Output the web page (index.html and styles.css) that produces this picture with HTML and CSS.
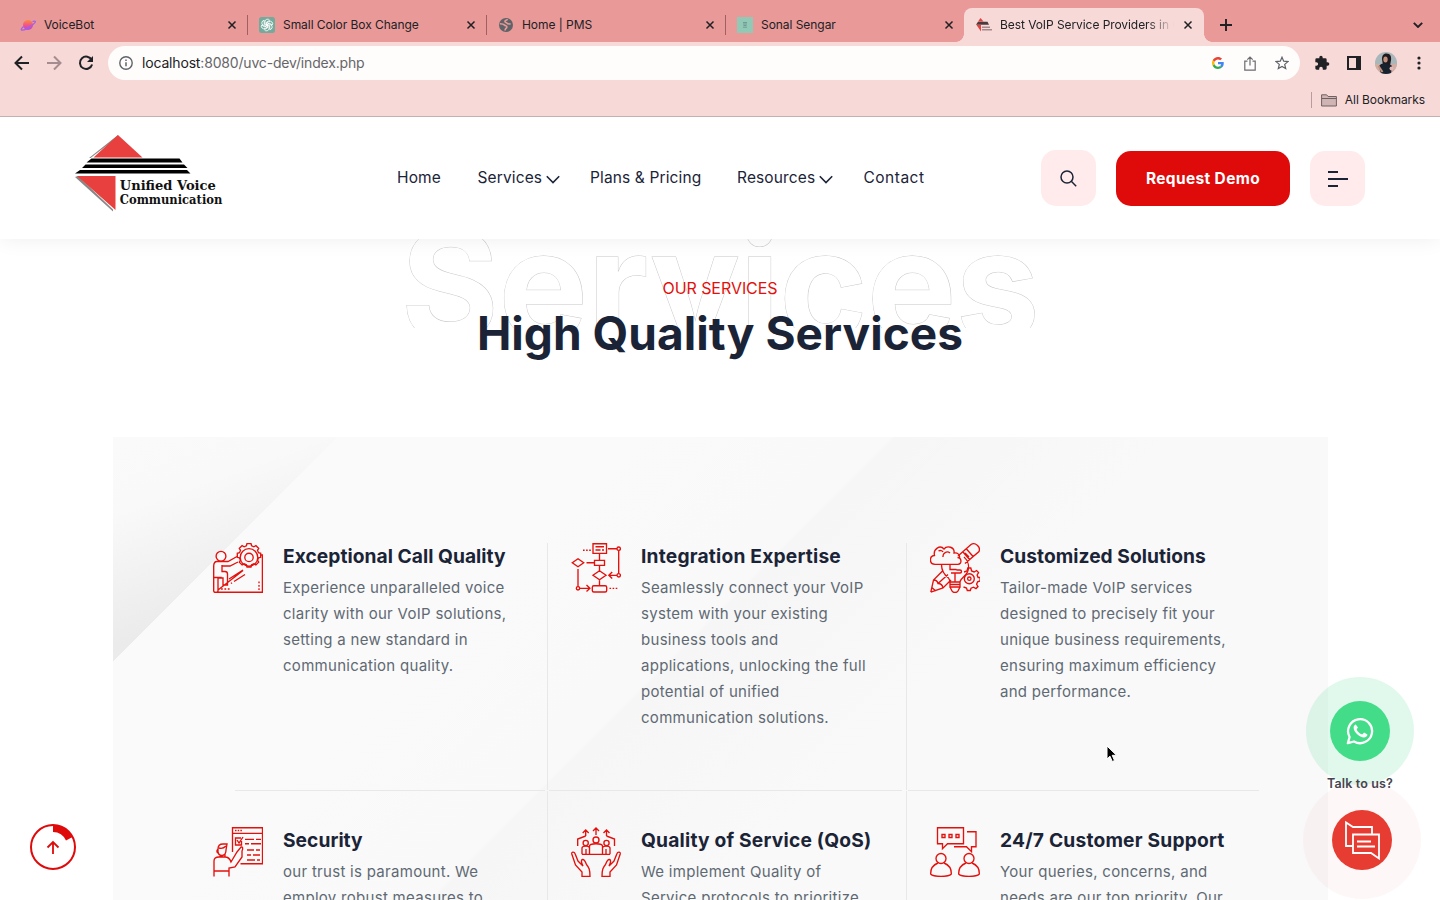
FILE: index.html
```html
<!DOCTYPE html>
<html lang="en">
<head>
<meta charset="utf-8">
<title>Best VoIP Service Providers</title>
<link rel="stylesheet" href="styles.css">
</head>
<body>
<div class="screen">
  <div class="chrome">
    <div class="tabs">
      <div class="tab">
        <svg class="fav" viewBox="0 0 16 16"><defs><linearGradient id="pl" x1="0" y1="0" x2="0" y2="1"><stop offset="0" stop-color="#fb8c3c"/><stop offset=".55" stop-color="#f0518c"/><stop offset="1" stop-color="#b04be0"/></linearGradient></defs><circle cx="8" cy="8" r="5" fill="url(#pl)"/><path d="M3.6 9.6C.8 11.8.6 13.4 2.6 13.2 6 12.800 14 7.500 15.300 5 15.600 3.800 14 3.900 12.500 4.500" fill="none" stroke="#a35fe6" stroke-width="1.300"/></svg>
        <span class="tt">VoiceBot</span><svg class="x" viewBox="0 0 10 10"><path d="M1.500 1.500l7 7M8.500 1.500l-7 7"/></svg>
      </div>
      <div class="tab sep">
        <svg class="fav" viewBox="0 0 16 16"><rect width="16" height="16" rx="2.500" fill="#74aa9c"/><g fill="none" stroke="#fff" stroke-width=".8"><path id="k" d="M6 8.200V4.600a2.500 2.500 0 0 1 4.600-1.300L7.400 5.200v4"/><use href="#k" transform="rotate(60 8 8)"/><use href="#k" transform="rotate(120 8 8)"/><use href="#k" transform="rotate(180 8 8)"/><use href="#k" transform="rotate(240 8 8)"/><use href="#k" transform="rotate(300 8 8)"/></g></svg>
        <span class="tt">Small Color Box Change</span><svg class="x" viewBox="0 0 10 10"><path d="M1.500 1.500l7 7M8.500 1.500l-7 7"/></svg>
      </div>
      <div class="tab sep">
        <svg class="fav" viewBox="0 0 16 16"><circle cx="8" cy="8" r="7" fill="#5f6368"/><path d="M2 6.800c2 .1 3.500.2 4.600 1.300.8.9 2.300.3 2.300 1.800 0 1.300-1.700 1-1.900 3.600M9.500 2.200c-.3 1.500-2.600.8-2.600 2.300 0 1.200 1.600.6 2.100 1.600.5 1 1.800 1 3.600.8" fill="none" stroke="#e99998" stroke-width="1.600"/></svg>
        <span class="tt">Home | PMS</span><svg class="x" viewBox="0 0 10 10"><path d="M1.500 1.500l7 7M8.500 1.500l-7 7"/></svg>
      </div>
      <div class="tab sep">
        <svg class="fav" viewBox="0 0 16 16"><rect width="16" height="16" fill="#92c9b6"/><path d="M6 5.500h4M6 7h4M6.500 8.500h3M6 10.200h4" stroke="#6f9d90" stroke-width="1"/></svg>
        <span class="tt">Sonal Sengar</span><svg class="x" viewBox="0 0 10 10"><path d="M1.500 1.500l7 7M8.500 1.500l-7 7"/></svg>
      </div>
      <div class="tab active">
        <svg class="fav" viewBox="0 0 16 16"><path d="M4.500 1L7.500 4.500H2zM.5 8H5v6.500z" fill="#e8403f"/><path d="M2 4.800h9.500l1.500 3H0z" fill="#4a3a3c"/><path d="M6 10.300h8M6 12.700h10" stroke="#a58a8b" stroke-width="1.400"/></svg>
        <span class="tt fade">Best VoIP Service Providers in C</span><svg class="x" viewBox="0 0 10 10"><path d="M1.500 1.500l7 7M8.500 1.500l-7 7"/></svg>
      </div>
      <svg class="plus" viewBox="0 0 12 12"><path d="M6 0v12M0 6h12"/></svg>
      <svg class="chev" viewBox="0 0 10 6"><path d="M.8.8L5 5 9.200.8"/></svg>
    </div>
    <div class="toolbar">
      <svg class="tb" viewBox="0 0 16 16"><path d="M15 8H2M8 1.500L1.500 8 8 14.500" fill="none" stroke="#202124" stroke-width="2"/></svg>
      <svg class="tb" viewBox="0 0 16 16"><path d="M1 8h13M8 1.500L14.500 8 8 14.500" fill="none" stroke="#a58c8e" stroke-width="2"/></svg>
      <svg class="tb" viewBox="0 0 16 16"><path d="M13.700 5A6.200 6.200 0 1 0 14.100 9.500" fill="none" stroke="#202124" stroke-width="2"/><path d="M15 1v6H9z" fill="#202124"/></svg>
      <div class="omni">
        <svg class="info" viewBox="0 0 14 14"><circle cx="7" cy="7" r="6.200" fill="none" stroke="#5f6368" stroke-width="1.400"/><path d="M7 6.200v4M7 3.400v1.600" stroke="#5f6368" stroke-width="1.500"/></svg>
        <span class="url"><b>localhost</b>:8080/uvc-dev/index.php</span>
        <svg class="g" viewBox="0 0 48 48"><path fill="#EA4335" d="M24 9.500c3.500 0 6.700 1.200 9.200 3.600l6.900-6.900C35.900 2.400 30.500 0 24 0 14.600 0 6.500 5.400 2.600 13.200l8 6.200C12.400 13.700 17.700 9.500 24 9.500z"/><path fill="#4285F4" d="M47 24.600c0-1.600-.2-3.100-.4-4.600H24v9h12.900c-.6 3-2.300 5.500-4.800 7.200l7.700 6C44.400 38 47 31.800 47 24.600z"/><path fill="#FBBC05" d="M10.500 28.600a14.500 14.500 0 0 1 0-9.200l-8-6.200a24 24 0 0 0 0 21.600z"/><path fill="#34A853" d="M24 48c6.500 0 11.900-2.100 15.900-5.800l-7.700-6c-2.200 1.500-4.900 2.300-8.200 2.300-6.300 0-11.600-4.200-13.500-9.900l-8 6.200C6.500 42.600 14.600 48 24 48z"/></svg>
        <svg class="share" viewBox="0 0 12 15"><path d="M3.500 5.200H.8v8.900h10.400V5.200H8.500M6 9.500V1.200M3.300 3.600L6 1l2.700 2.600" fill="none" stroke="#6b6b70" stroke-width="1.200"/></svg>
        <svg class="star" viewBox="0 0 14 14"><path d="M7 1.200l1.700 4 4.300.4-3.300 2.800 1 4.200L7 10.400l-3.700 2.200 1-4.200L1 5.600l4.300-.4z" fill="none" stroke="#5f6368" stroke-width="1.200"/></svg>
      </div>
      <svg class="ext" viewBox="0 0 24 24"><path fill="#202124" d="M20.500 11H19V7a2 2 0 0 0-2-2h-4V3.500a2.500 2.500 0 0 0-5 0V5H4a2 2 0 0 0-2 2v3.800h1.500a2.700 2.700 0 0 1 0 5.400H2V20c0 1.100.9 2 2 2h3.800v-1.500a2.700 2.700 0 0 1 5.400 0V22H17a2 2 0 0 0 2-2v-4h1.500a2.500 2.500 0 0 0 0-5z"/></svg>
      <svg class="side" viewBox="0 0 14 14"><path d="M1 1h12v12H1z" fill="none" stroke="#202124" stroke-width="2"/><path d="M9 1h4v12H9z" fill="#202124"/></svg>
      <svg class="ava" viewBox="0 0 22 22"><defs><clipPath id="av"><circle cx="11" cy="11" r="11"/></clipPath></defs><g clip-path="url(#av)"><rect width="22" height="22" fill="#a9b7ba"/><rect y="12" width="22" height="10" fill="#d0aea4"/><path d="M7 7c0-4 2-5.500 4.500-5.500 4 0 5 3 4.500 7l-1 5H8z" fill="#1d1a20"/><ellipse cx="10.500" cy="7.500" rx="2.200" ry="3" fill="#c58f7c"/><path d="M4 14c2-3 5-3 7-2s5 0 6 2l-1 8H6z" fill="#17222f"/><path d="M3.500 14l4 6" stroke="#c58f7c" stroke-width="2"/><circle cx="16.500" cy="16.500" r="2" fill="#e6b5b5"/></g></svg>
      <svg class="dots" viewBox="0 0 4 14"><circle cx="2" cy="2" r="1.600"/><circle cx="2" cy="7" r="1.600"/><circle cx="2" cy="12" r="1.600"/></svg>
    </div>
    <div class="marks">
      <i></i>
      <svg viewBox="0 0 16 13"><path d="M.6 12V.8h5l1.500 1.700h8.300V12z" fill="#d0b4b4" stroke="#6f6163" stroke-width="1"/><path d="M.6 4.500h14.800" stroke="#6f6163"/></svg>
      <span>All Bookmarks</span>
    </div>
  </div>

  <header class="head">
    <svg class="logo" viewBox="0 0 150 80"><g><path d="M43 1L14 24h1.500L43 3zM0 43l38 34.500v-2L3 42z" fill="#888"/><path d="M43 1L67.500 23.500H18.500z" fill="#e8403f"/><path d="M16.500 24.500H104.500l3 4H11.500zM10.500 30.500H109l3.500 3.500H7zM5 36h107l3.500 3.500H0z" fill="#000"/><path d="M2 42H40.500V76z" fill="#e8403f"/></g><g font-family="DejaVu Serif, serif" font-weight="700" fill="#111"><text x="44.800" y="55.500" font-size="12.500" textLength="96" lengthAdjust="spacingAndGlyphs">Unified Voice</text><text x="44.800" y="69.800" font-size="12" textLength="102.500" lengthAdjust="spacingAndGlyphs">Communication</text></g></svg>
    <nav class="nav">
      <a>Home</a>
      <a>Services<svg viewBox="0 0 14 9"><path d="M.8 1.200L7 7.500l6.200-6.300"/></svg></a>
      <a>Plans &amp; Pricing</a>
      <a>Resources<svg viewBox="0 0 14 9"><path d="M.8 1.200L7 7.500l6.200-6.300"/></svg></a>
      <a class="wide">Contact</a>
    </nav>
    <div class="acts">
      <div class="sq tall"><svg width="17" height="17" viewBox="0 0 17 17" fill="none" stroke="#1b2437" stroke-width="1.500"><circle cx="7" cy="7" r="6"/><path d="M11.300 11.300l4.900 4.900"/></svg></div>
      <div class="cta">Request Demo</div>
      <div class="sq"><svg width="20" height="16" viewBox="0 0 20 16"><path d="M0 1h10M0 8h20M0 15h10" stroke="#1b2437" stroke-width="2"/></svg></div>
    </div>
  </header>

  <main>
    <div class="intro">
      <div class="ghost"><span>Services</span></div>
      <p class="eyebrow">OUR SERVICES</p>
      <h2>High Quality Services</h2>
    </div>

    <section class="panel">
      <div class="row">
        <article class="cell">
          <svg class="ic" viewBox="0 0 50 50"><circle cx="8" cy="13.300" r="4.900"/><path d="M33.400 2.800l.6-2.200h4l.6 2.200 2.300 1 2-1.200 2.800 2.800-1.200 2 1 2.300 2.200.6v4l-2.200.6-1 2.300 1.200 2-2.800 2.800-2-1.200-2.300 1-.6 2.200h-4l-.6-2.200-2.300-1-2 1.200-2.800-2.800 1.200-2-1-2.300-2.200-.6v-4l2.200-.6 1-2.300-1.200-2 2.800-2.800 2 1.200z"/><circle cx="36" cy="14.400" r="8.800"/><circle cx="36" cy="14.400" r="4.200"/><path d="M47.500 12h1.900v37.200H2.500M24 13.500L15 18.500H4C2 18.500.7 20 .7 23v25c0 2 4.300 2 4.300 0V35h5v7h4.500V31c0-1.500-1-2.500-2.500-2.500H9V23h8l8-4M.7 34.500h8M9 22v7M5 47L30 27.500M16 36l14-9M21 38.500l11-7M18 40.500l1-.8"/><path d="M8 46h9M46 38.500v8.500" stroke-dasharray="1.800 1.600"/></svg>
          <div><h3>Exceptional Call Quality</h3><p>Experience unparalleled voice<br>clarity with our VoIP solutions,<br>setting a new standard in<br>communication quality.</p></div>
        </article>
        <article class="cell">
          <svg class="ic" viewBox="0 0 50 50"><path d="M22 .7h13.500v9.600H22zM24.500 3.700h8.500M24.500 7h5M31 7h2M28.500 10.300v7M23.500 17.300h10v5h-10zM28.500 22.300v5.500M28.500 27.800l6.500 4.500-6.500 4.500-6.500-4.500zM28.500 36.800v6M7 15.700l5.700 4-5.700 4-5.700-4zM15.500 19.700h8M7 26v17.500M8.700 45.300H19M15.500 42l3.400 3.300-3.400 3.300M37 5.700h9M47.700 7.400v23.200M46 32.300h-8M41.200 29l-3.400 3.300 3.400 3.300"/><rect x="21.300" y="42.700" width="14.400" height="6.300" rx="1.500"/><circle cx="7" cy="45.300" r="1.700"/><circle cx="47.700" cy="5.700" r="1.700"/><circle cx="47.700" cy="32.300" r="1.700"/><path d="M12 7.200h8M38.500 45.300h8" stroke-dasharray="1.600 1.500"/></svg>
          <div><h3 class="loose">Integration Expertise</h3><p>Seamlessly connect your VoIP<br>system with your existing<br>business tools and<br>applications, unlocking the full<br>potential of unified<br>communication solutions.</p></div>
        </article>
        <article class="cell last">
          <svg class="ic" viewBox="0 0 50 50"><path d="M5 21.300C-1 21-1 13 4.500 12.500 3 6 10 1.500 14 6c3-4 11-2 10 4 4-.5 6 2 5.500 4.500M5 21.300h23c4 0 4-6.500-.5-6.800M13 14c-.5-4 4-6.500 7-4M8.500 8c1.500-1 4-.5 4.500 1"/><path d="M11.500 21.500c0 7 3 10.500 7 13.500 1 1.500 1.500 2.500 1.500 4h10c0-3 5-5 7.500-10 2-5 1-11-3.500-15M20 39v5h10v-5M20 41.500h10M20 44l2 4c1 2 5 2 6 0l2-4M20 21.500v5h6.500M21 30h9c2 0 2-3 0-3h-3.500M25 30v9M28 13L41 1.500c4-2.500 10 2 8 7L35 20.500M33 9l7 8M36.500 6l7 8M39 14l-4-4M.8 49.200L3.500 37l9-9M.8 49.200L13 45l8-8M3.500 37c3 0 4 1 4.500 3.500 3 0 4.500 1.500 5 4.500M1.800 44.500l4 3.500M8 40.500l10-9"/><path d="M34 29l3-1 .8-3h3l.8 3 2.500 1 2.500-1.500 2 2-1.500 2.500 1 2.500h2v3.500l-2.500.8-1 2.500 1.400 2.300-2 2-2.500-1.400-2.500 1-.7 2.300h-3l-.8-2.500-3-1"/><circle cx="39.300" cy="35.700" r="5"/><circle cx="39.300" cy="35.700" r="1.700"/></svg>
          <div><h3>Customized Solutions</h3><p>Tailor-made VoIP services<br>designed to precisely fit your<br>unique business requirements,<br>ensuring maximum efficiency<br>and performance.</p></div>
        </article>
      </div>
      <div class="rule"><i></i><i></i><i></i></div>
      <div class="row second">
        <article class="cell">
          <svg class="ic" viewBox="0 0 50 50"><path d="M19.500 25V.7h30v36h-22M19.500 6.300h30M28 11h-5.500v7h6v-4M24 13l2 3 4-6M32 12.300h9M43 12.300h5M32 16.700h4M38 16.700h10M34 23h7M43 23h4M34 28h4M40 28h7M34 33h8M44 33h3"/><path d="M22 3.500h8" stroke-dasharray="1.500 1.200"/><path d="M5 22c0-3 2-5 5-5h4l-1 6c0 7-7 7-8 2zM5 22c-2 2-1 4 .5 4M6 21c3 1 5 0 7-2M7 28v2M12 27.500V30M1 49.500V34c0-3 2-4 5-4h6c3 0 5 2 6 5l6-10 4-5c2-.5 2 2 1 4v6L22 40l-6 1v8.500M1 44h15"/></svg>
          <div><h3>Security</h3><p>our trust is paramount. We<br>employ robust measures to</p></div>
        </article>
        <article class="cell">
          <svg class="ic" viewBox="0 0 50 50"><path d="M25 8V1M22 4l3-3 3 3M14.700 9V3.500M11.700 6l3-3 3 3M35.500 9V3.500M32.500 6l3-3 3 3M14.700 9l-8 3v7M35.500 9l8 3v7M11 27.300V21c0-2.500 7.500-2.500 7.500 0M39 27.300V21c0-2.500-7.500-2.500-7.500 0M18.500 27.300V19c0-3 13-3 13 0v8.300M11 27.300h28M15 22v5M35 22v5"/><circle cx="14.700" cy="16" r="2.600"/><circle cx="25" cy="13" r="3"/><circle cx="35.500" cy="16" r="2.600"/><path d="M11 49.500v-4.500L4.500 38 .8 27c-.5-2.500 2.500-2.500 3.200-.5L7 34l5 5c-2-4-2-6-.5-6.500 2-.5 3 2.500 4 5 2.500 3 3.500 5 3.500 12zM39 49.500v-4.500l6.500-7 3.700-11c.5-2.500-2.500-2.500-3.200-.5L43 34l-5 5c2-4 2-6 .5-6.500-2-.5-3 2.500-4 5-2.500 3-3.500 5-3.500 12z"/></svg>
          <div><h3 class="loose">Quality of Service (QoS)</h3><p>We implement Quality of<br>Service protocols to prioritize</p></div>
        </article>
        <article class="cell last">
          <svg class="ic" viewBox="0 0 50 50"><path d="M7.500.7h26v16h-16l-5 5v-5h-5zM12 7.500h3v3h-3zM19 7.500h3v3h-3zM26 7.500h3v3h-3zM37 4.700h9v15h-4.500v5l-5-5H24"/><circle cx="11" cy="31.500" r="5"/><circle cx="39" cy="31.500" r="5"/><path d="M8 36c-5 2-7.500 6-7.300 11 2.500 3.200 18 3.200 20.600 0 .2-5-2.300-9-7.300-11M36 36c-5 2-7.500 6-7.300 11 2.500 3.200 18 3.200 20.600 0 .2-5-2.300-9-7.300-11"/></svg>
          <div><h3 class="loose">24/7 Customer Support</h3><p>Your queries, concerns, and<br>needs are our top priority. Our</p></div>
        </article>
      </div>
    </section>
  </main>

  <svg class="totop" viewBox="0 0 46 46"><circle cx="23" cy="23" r="22" fill="#fff" stroke="#df0a0a" stroke-width="2"/><path d="M23 1A22 22 0 0 1 42.500 13L36 16.500A14.500 14.500 0 0 0 23 8z" fill="#df0a0a"/><path d="M23 30V18.500M17.500 23.500L23 18l5.500 5.500" fill="none" stroke="#df0a0a" stroke-width="1.800"/></svg>

  <div class="halo green"><div><svg width="28" height="28" viewBox="0 0 28 28"><path d="M1.800 26.200L3.600 20A12 12 0 1 1 8 24.500z" fill="none" stroke="#fff" stroke-width="2.300" stroke-linejoin="round"/><path d="M9.800 7.500c-.8 0-2.300 1.300-2.200 3.300.2 4.500 6 9.700 10.300 9.700 2 0 3.600-1.400 3.500-3l-3.300-1.900-1.900 2c-2.600-1-4.500-2.800-5.600-5.200l1.300-1.800z" fill="#fff"/></svg></div></div>
  <div class="halo red"><div><svg width="36" height="40" viewBox="0 0 36 40" fill="none" stroke="#fff" stroke-width="1.800"><path d="M9 26H2V2.500l7 4.500h19v7"/><path d="M9 14.500h26V38.500l-8-5.500H9zM13 21.500h14M13 26.500h18"/></svg></div></div>
  <div class="talk">Talk to us?</div>
  <svg class="cursor" viewBox="0 0 12 18"><path d="M1 1v13l3-2.800 2.300 5.300 2.200-1L6.200 10.300h4.300z" fill="#000" stroke="#fff" stroke-width="1"/></svg>
</div>
</body>
</html>
```
FILE: styles.css
```css
* { box-sizing: border-box; }
body { margin: 0; font-family: Inter, "Liberation Sans", sans-serif; background: #fff; }
h2, h3, p { margin: 0; }
svg { display: block; flex: none; }
.screen { position: relative; width: 1440px; height: 900px; overflow: hidden; }

/* browser frame */
.chrome { position: relative; z-index: 5; height: 117px; background: #f7d9d8; border-bottom: 1px solid #c9aeaf; color: #202124; font-size: 12px; }
.tabs { display: flex; height: 42px; padding: 8px 0 0 8px; background: #e99998; }
.tab { position: relative; display: flex; align-items: center; width: 239px; height: 34px; padding: 0 10px 0 12px; }
.tab.sep::before { content: ""; position: absolute; left: 0; top: 7px; width: 1px; height: 20px; background: #a05f61; }
.tab.active { width: 240px; padding-right: 11px; background: #f7d9d8; border-radius: 8px 8px 0 0; }
.tab.active::before, .tab.active::after { content: ""; position: absolute; bottom: 0; width: 8px; height: 8px; }
.tab.active::before { left: -8px; background: radial-gradient(circle at 0 0, #e99998 7.500px, #f7d9d8 8px); }
.tab.active::after { right: -8px; background: radial-gradient(circle at 100% 0, #e99998 7.500px, #f7d9d8 8px); }
.fav { width: 16px; height: 16px; }
.tt { flex: 1; margin: 0 12px 0 8px; padding-bottom: 2px; white-space: nowrap; letter-spacing: -.05px; }
.fade { width: 174px; flex: none; margin-right: 9px; overflow: hidden; letter-spacing: -.07px; -webkit-mask-image: linear-gradient(90deg, #000 146px, transparent 174px); mask-image: linear-gradient(90deg, #000 146px, transparent 174px); }
.x { width: 10px; height: 10px; }
.active .x { margin-left: auto; }
.x path, .plus path, .chev path { fill: none; stroke: #202124; stroke-width: 1.500; }
.plus { width: 12px; height: 12px; margin: 11px 0 0 16px; }
.plus path, .chev path { stroke-width: 1.900; }
.chev { width: 10px; height: 6px; margin: 14px 17px 0 auto; }
.toolbar { display: flex; align-items: center; height: 42px; padding: 0 19px 0 14px; }
.tb { width: 16px; height: 16px; margin-right: 16px; }
.omni { display: flex; align-items: center; width: 1192px; height: 34px; margin-left: -2px; padding: 0 11px; border-radius: 17px; background: #fffdfc; }
.info { width: 14px; height: 14px; }
.url { flex: 1; margin-left: 9px; padding-bottom: 2px; font-size: 14px; letter-spacing: -.17px; color: #65666a; }
.url b { font-weight: 400; color: #202124; }
.g { width: 12px; height: 12px; }
.share { width: 12px; height: 15px; margin-left: 20px; }
.star { width: 14px; height: 14px; margin-left: 19px; }
.ext { width: 16px; height: 16px; margin-left: 14px; }
.side { width: 14px; height: 14px; margin-left: 17px; }
.ava { width: 22px; height: 22px; margin-left: 14px; }
.dots { width: 4px; height: 14px; margin-left: 19.500px; fill: #202124; }
.marks { display: flex; align-items: center; justify-content: flex-end; height: 32px; padding-right: 15px; letter-spacing: -.08px; }
.marks span { padding-bottom: 2px; }
.marks i { width: 1px; height: 16px; margin-right: 9px; background: #b99c9e; }
.marks svg { width: 16px; height: 13px; margin-right: 8px; }

/* site header */
.head { position: relative; z-index: 4; display: flex; height: 122px; padding: 0 75px; background: #fff; box-shadow: 0 0 20px rgba(0, 0, 0, .07); }
.logo { width: 150px; height: 80px; margin-top: 17px; }
.nav { display: grid; grid-template-columns: 80.500px 112.500px 147px 126.500px 80px; margin: 51px 0 0 172px; font-size: 15.500px; font-weight: 430; line-height: 20px; letter-spacing: .13px; color: #1b2437; height: 20px; }
.nav a { display: flex; align-items: center; white-space: nowrap; }
.nav .wide { letter-spacing: .5px; }
.nav svg { width: 14px; height: 9px; margin: 3px 0 0 4px; }
.nav path { fill: none; stroke: #1b2437; stroke-width: 1.600; }
.acts { display: flex; align-items: flex-end; gap: 20px; height: 89px; margin-left: auto; }
.sq { display: grid; place-items: center; width: 55px; height: 55px; border-radius: 15px; background: #ffebeb; }
.tall { height: 56px; }
.cta { display: grid; place-items: center; width: 174px; height: 55px; border-radius: 15px; background: #df0a0a; color: #fff; font-size: 15.500px; font-weight: 700; letter-spacing: .35px; }

/* section intro */
.intro { position: relative; height: 198px; padding-top: 39px; text-align: center; }
.ghost { position: absolute; left: 0; right: 0; top: -29px; height: 118px; overflow: hidden; font-size: 150px; font-weight: 700; line-height: 150px; letter-spacing: -.600px; color: #fff; -webkit-text-stroke: 1px #c8c8c8; paint-order: stroke; }
.eyebrow { position: relative; font-size: 16px; line-height: 20px; letter-spacing: -.06px; color: #e3100c; }
h2 { position: relative; margin-top: 7px; font-size: 46px; font-weight: 700; line-height: 56px; letter-spacing: .05px; color: #1b2437; }

/* services panel */
.panel { width: 1215px; height: 463px; margin-left: 113px; padding: 106px 0 0 100px; overflow: hidden;
  background: linear-gradient(135deg, transparent 49.800%, #fafafa 50%) 0 0 / 225px 225px no-repeat,
    linear-gradient(160deg, #fafafa 0, #f9f9f9 25%, #ebebeb 68%) 0 0 / 225px 225px no-repeat,
    linear-gradient(135deg, #fafafa 0, #fafafa 20%, #f9f9f9 32%, #f6f6f6 32.200%, #f9f9f9 44%, #f9f9f9 100%) 0 0 / 1215px 1215px no-repeat; }
.row { display: flex; height: 247px; }
.second .cell { padding-top: 36px; }
.cell { display: flex; width: 335px; margin-right: 23px; border-right: 1px solid #e8e8e8; }
.cell + .cell { width: 336px; }
.cell.last { border: 0; }
.ic { width: 50px; height: 50px; margin-right: 20px; fill: none; stroke: #e3100c; stroke-width: 1.350; }
h3 { padding-top: 1px; font-size: 19.200px; font-weight: 700; line-height: 24px; letter-spacing: .04px; color: #1b2437; white-space: nowrap; }
h3.loose { letter-spacing: .2px; }
.cell p { margin-top: 7px; font-size: 15px; line-height: 26px; letter-spacing: .29px; color: #5f6973; white-space: nowrap; }
.rule { display: flex; height: 1px; margin-left: 22px; }
.rule i { width: 310px; background: #e8e8e8; }
.rule i:nth-child(2) { width: 353px; margin: 0 6px 0 4px; }
.rule i:nth-child(3) { width: 351px; }

/* floating widgets */
.totop { position: absolute; left: 30px; top: 824px; width: 46px; height: 46px; }
.halo { position: absolute; display: grid; place-items: center; border-radius: 50%; }
.halo div { display: grid; place-items: center; width: 60px; height: 60px; border-radius: 50%; }
.green { left: 1306px; top: 677px; width: 108px; height: 108px; background: rgba(67, 220, 137, .16); }
.green div { background: #43dc89; }
.red { left: 1303px; top: 781px; width: 118px; height: 118px; background: rgba(230, 60, 49, .04); }
.red div { background: #e63c31; }
.talk { position: absolute; left: 1327px; top: 775px; font-size: 12.500px; font-weight: 600; line-height: 17px; letter-spacing: .15px; color: #45454f; }
.cursor { position: absolute; left: 1106px; top: 745px; width: 12px; height: 18px; }
```
